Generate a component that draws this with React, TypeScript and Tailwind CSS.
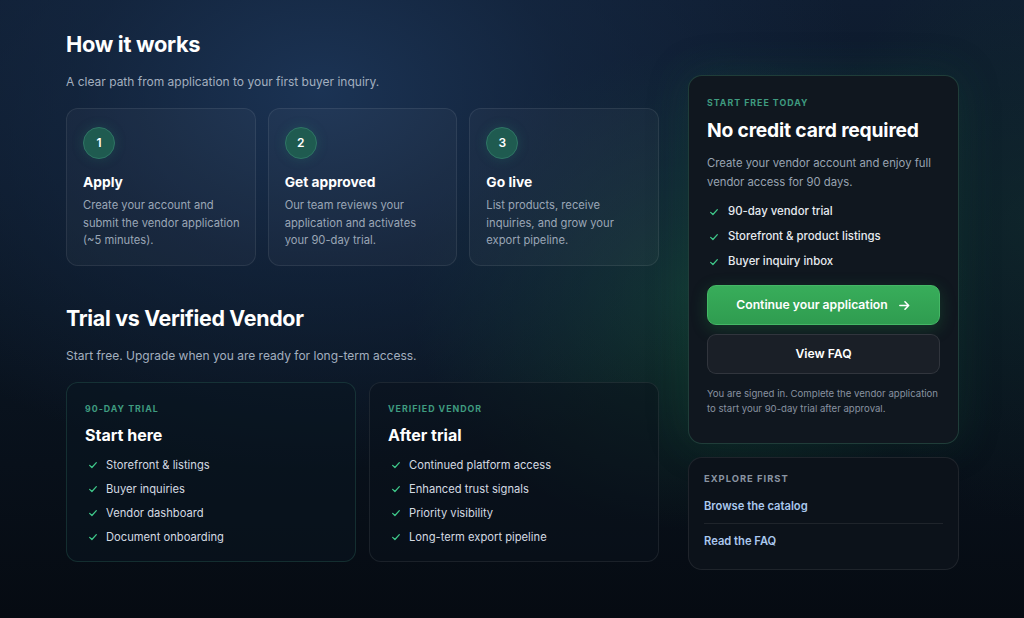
import React from "react";

const Check = () => (
  <svg width="10" height="10" viewBox="0 0 12 12" fill="none" className="shrink-0">
    <path d="M2 6.4 4.7 9 10 3.2" stroke="#3fc98a" strokeWidth="1.5" strokeLinecap="round" strokeLinejoin="round" />
  </svg>
);

const steps = [
  { n: "1", t: "Apply", d: "Create your account and submit the vendor application (~5 minutes)." },
  { n: "2", t: "Get approved", d: "Our team reviews your application and activates your 90-day trial." },
  { n: "3", t: "Go live", d: "List products, receive inquiries, and grow your export pipeline." },
];

const trial = ["Storefront & listings", "Buyer inquiries", "Vendor dashboard", "Document onboarding"];
const verified = ["Continued platform access", "Enhanced trust signals", "Priority visibility", "Long-term export pipeline"];
const perks = ["90-day vendor trial", "Storefront & product listings", "Buyer inquiry inbox"];

export default function App() {
  return (
    <div
      className="min-h-[618px] w-full text-white bg-[#08111b] bg-[radial-gradient(ellipse_540px_380px_at_320px_90px,#1b3354_0%,rgba(22,42,70,0.6)_45%,transparent_100%),radial-gradient(ellipse_280px_240px_at_690px_290px,rgba(24,80,58,0.55)_0%,transparent_100%),radial-gradient(ellipse_200px_300px_at_1024px_220px,rgba(20,60,50,0.35)_0%,transparent_100%),linear-gradient(180deg,#0f1d31_0%,#0a1522_50%,#060b12_100%)]"
      style={{ fontFamily: "Inter, 'Noto Sans', sans-serif" }}
    >
      <div className="flex gap-[29px] pl-[66px] pt-[30px]">
        {/* Left column */}
        <div className="w-[593px] flex flex-col">
          <h2 className="text-[21.8px] leading-[28px] font-bold tracking-[-0.3px]">How it works</h2>
          <p className="mt-[14px] text-[12px] leading-[20px] text-[#a3afbf]">
            A clear path from application to your first buyer inquiry.
          </p>
          <div className="mt-4 grid grid-cols-3 gap-[12px]">
            {steps.map((s) => (
              <div
                key={s.n}
                className="h-[158px] rounded-[12px] border border-[rgba(255,255,255,0.08)] bg-[rgba(255,255,255,0.03)] pl-4 pr-[10px] pt-[18px]"
              >
                <div className="w-[32px] h-[32px] rounded-full bg-[#1f5b50] border border-[#2f7565] flex items-center justify-center text-[12px] font-semibold shadow-[0_0_12px_rgba(40,140,110,0.25)]">
                  {s.n}
                </div>
                <div className="mt-[13px] text-[13.8px] leading-[20px] font-bold">{s.t}</div>
                <p className="mt-[5px] max-w-[157px] text-[11.2px] leading-[17.5px] text-[#9aa6b6]">{s.d}</p>
              </div>
            ))}
          </div>

          <h2 className="mt-[38px] text-[21.4px] leading-[28px] font-bold tracking-[-0.3px]">Trial vs Verified Vendor</h2>
          <p className="mt-[14px] text-[12px] leading-[20px] text-[#a3afbf]">
            Start free. Upgrade when you are ready for long-term access.
          </p>
          <div className="mt-4 grid grid-cols-2 gap-[13px]">
            <div className="h-[180px] rounded-[12px] border border-[rgba(70,150,125,0.22)] bg-[rgba(10,22,32,0.55)] px-[18px] pt-[19px]">
              <div className="text-[8.8px] leading-[14px] font-bold tracking-[1px] text-[#3f9c80]">90-DAY TRIAL</div>
              <div className="mt-[7px] text-[16px] leading-[24px] font-bold">Start here</div>
              <ul className="mt-[6px]">
                {trial.map((t) => (
                  <li key={t} className="flex items-center gap-[8px] h-[24px] pl-[3px] text-[11.2px] text-[#d4dae2]">
                    <Check />
                    {t}
                  </li>
                ))}
              </ul>
            </div>
            <div className="h-[180px] rounded-[12px] border border-[rgba(255,255,255,0.08)] bg-[rgba(10,18,28,0.5)] px-[18px] pt-[19px]">
              <div className="text-[8.8px] leading-[14px] font-bold tracking-[1px] text-[#3f9c80]">VERIFIED VENDOR</div>
              <div className="mt-[7px] text-[16px] leading-[24px] font-bold">After trial</div>
              <ul className="mt-[6px]">
                {verified.map((t) => (
                  <li key={t} className="flex items-center gap-[8px] h-[24px] pl-[3px] text-[11.2px] text-[#d4dae2]">
                    <Check />
                    {t}
                  </li>
                ))}
              </ul>
            </div>
          </div>
        </div>

        {/* Right column */}
        <div className="w-[271px] flex flex-col mt-[45px]">
          <div className="rounded-[14px] border border-[rgba(70,150,120,0.3)] bg-[#10171f] px-[18px] pt-[20px] pb-[27px] shadow-[0_0_40px_rgba(20,90,60,0.25)]">
            <div className="text-[8.8px] leading-[14px] font-bold tracking-[1px] text-[#3f9c80]">START FREE TODAY</div>
            <div className="mt-[6px] text-[19.3px] leading-[28px] font-bold tracking-[-0.2px]">No credit card required</div>
            <p className="mt-[10px] text-[11.3px] leading-[19px] text-[#98a3b1]">
              Create your vendor account and enjoy full vendor access for 90 days.
            </p>
            <ul className="mt-[7px]">
              {perks.map((t) => (
                <li key={t} className="flex items-center gap-[9px] h-[25px] pl-[2px] text-[11.4px] font-medium text-[#e6eaef]">
                  <Check />
                  {t}
                </li>
              ))}
            </ul>
            <button className="mt-[11px] w-full h-[40px] rounded-[9px] bg-[linear-gradient(180deg,#38ad5a,#2f9c50)] border border-[#45b866] text-[12.2px] font-semibold flex items-center justify-center gap-[10px] shadow-[0_4px_16px_rgba(40,160,80,0.25)]">
              Continue your application
              <svg width="13" height="13" viewBox="0 0 14 14" fill="none">
                <path d="M2 7h9.5M7.5 3l4 4-4 4" stroke="white" strokeWidth="1.7" strokeLinecap="round" strokeLinejoin="round" />
              </svg>
            </button>
            <button className="mt-[9px] w-full h-[40px] rounded-[9px] bg-[#1a1f27] border border-[rgba(255,255,255,0.1)] text-[12.2px] font-semibold">
              View FAQ
            </button>
            <p className="mt-[12px] text-[9.6px] leading-[15px] text-[#8892a0]">
              You are signed in. Complete the vendor application to start your 90-day trial after approval.
            </p>
          </div>

          <div className="mt-[13px] rounded-[14px] border border-[rgba(255,255,255,0.08)] bg-[#0c121a] px-[15px] pt-[14px] h-[113px]">
            <div className="text-[9.4px] leading-[14px] font-bold tracking-[1px] text-[#8a94a2]">EXPLORE FIRST</div>
            <div className="mt-[7px] text-[11.2px] leading-[26px] font-semibold text-[#abc8ee]">Browse the catalog</div>
            <div className="mt-[4px] h-px bg-[rgba(255,255,255,0.08)]" />
            <div className="mt-[4px] text-[11.2px] leading-[26px] font-semibold text-[#abc8ee]">Read the FAQ</div>
          </div>
        </div>
      </div>
    </div>
  );
}
